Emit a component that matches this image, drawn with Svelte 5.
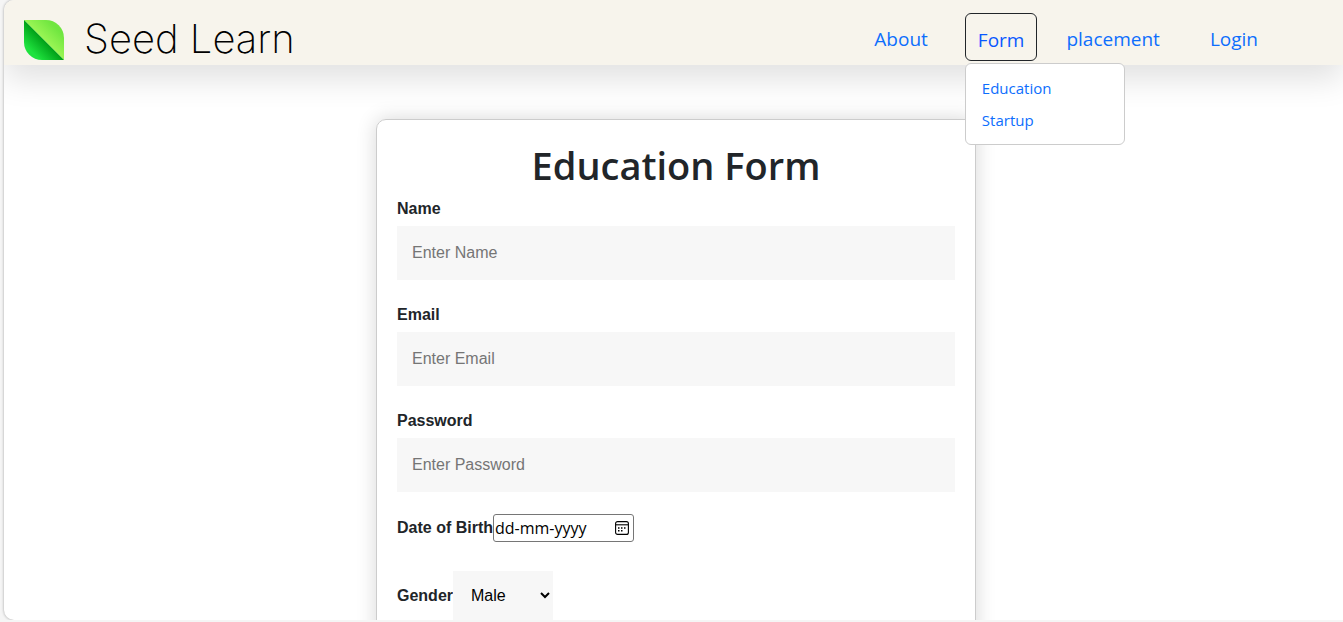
<script>
  const fields = [
    { id: 'name', label: 'Name', type: 'text' },
    { id: 'email', label: 'Email', type: 'email' },
    { id: 'password', label: 'Password', type: 'password' }
  ];
  let open = $state(true);
</script>

<div class="frame">
  <header>
    <a class="brand" href="#home">
      <svg width="40" height="40" viewBox="0 0 40 40" aria-hidden="true">
        <defs>
          <linearGradient id="light" gradientUnits="userSpaceOnUse" x1="20" y1="20" x2="32" y2="8">
            <stop offset="0" stop-color="#9bf655" />
            <stop offset="1" stop-color="#70e640" />
          </linearGradient>
          <linearGradient id="dark" gradientUnits="userSpaceOnUse" x1="8" y1="32" x2="20" y2="20">
            <stop offset="0" stop-color="#1fe23e" />
            <stop offset="1" stop-color="#00a018" />
          </linearGradient>
        </defs>
        <path d="M0 0H22A18 18 0 0 1 40 18V40Z" fill="url(#light)" />
        <path d="M0 0V22A18 18 0 0 0 18 40H40Z" fill="url(#dark)" />
      </svg>
      <span>Seed Learn</span>
    </a>
    <nav>
      <a class="link" href="#about">About</a>
      <div class="drop">
        <button type="button" class="toggle" aria-expanded={open} onclick={() => (open = !open)}>Form</button>
        {#if open}
          <div class="menu">
            <a href="#education">Education</a>
            <a href="#startup">Startup</a>
          </div>
        {/if}
      </div>
      <a class="link" href="#placement">placement</a>
      <a class="link" href="#login">Login</a>
    </nav>
  </header>

  <main>
    <form>
      <h1>Education Form</h1>
      {#each fields as f}
        <div class="field">
          <label for={f.id}>{f.label}</label>
          <input id={f.id} type={f.type} placeholder={'Enter ' + f.label} />
        </div>
      {/each}
      <div class="row">
        <label for="dob">Date of Birth</label>
        <div class="date">
          <input id="dob" type="text" placeholder="dd-mm-yyyy" />
          <button type="button" aria-label="Open calendar">
            <svg width="16" height="16" viewBox="0 0 16 16" fill="none" stroke="#000">
              <rect x="1.6" y="1.6" width="12.8" height="12.8" rx="2" stroke-width="1.1" />
              <path d="M2 4.8H14" stroke-width="1.1" />
              <path d="M4 8H5.5M7 8H8.5M10 8H11.5M4 10.7H5.5M7 10.7H8.5" stroke-width="1.5" />
            </svg>
          </button>
        </div>
      </div>
      <div class="row">
        <label for="gender">Gender</label>
        <select id="gender">
          <option>Male</option>
          <option>Female</option>
          <option>Other</option>
        </select>
      </div>
    </form>
  </main>
</div>

<style>
  :global(body) {
    background: #f5f5f5;
    font-family: "Open Sans", "Noto Sans", sans-serif;
    color: #212529;
    overflow: hidden;
  }
  * { box-sizing: border-box; }
  a { text-decoration: none; color: #0d6efd; }
  .frame {
    height: calc(100vh - 2px);
    margin-left: 4px;
    overflow: hidden;
    background: #fff;
    border-radius: 10px 0 0 10px;
    box-shadow: 0 0 3px rgba(0, 0, 0, 0.35);
  }
  header {
    position: relative;
    z-index: 2;
    display: flex;
    justify-content: space-between;
    height: 65px;
    padding: 13px 72px 0 20px;
    background: #f7f4ec;
    box-shadow: 0 14px 32px rgba(0, 0, 0, 0.12);
  }
  .brand {
    display: flex;
    align-items: center;
    gap: 20px;
    height: 54px;
    color: #000;
    font: 200 40px/48px Inter, sans-serif;
  }
  .brand span { padding-bottom: 2px; }
  nav {
    display: flex;
    align-items: flex-start;
    gap: 24px;
    font-size: 19px;
    line-height: 30px;
  }
  .link { padding: 11px 13px 7px; }
  .drop { position: relative; margin-right: -8px; }
  .toggle {
    display: block;
    height: 48px;
    padding: 6px 12px 0;
    border: 1px solid #212529;
    border-radius: 6px;
    background: none;
    color: #0a58ff;
    font: inherit;
  }
  .menu {
    position: absolute;
    top: 50px;
    left: 0;
    width: 160px;
    padding: 8px 0;
    border: 1px solid #ccc;
    border-radius: 6px;
    background: #fff;
    font-size: 15px;
    line-height: 24px;
  }
  .menu a { display: block; padding: 4px 16px; }
  main { padding: 54px 0 40px 5px; }
  form {
    max-width: 600px;
    margin: 0 auto;
    padding: 21px 20px 20px;
    border: 1px solid #ccc;
    border-radius: 10px;
    box-shadow: 0 0 20px rgba(0, 0, 0, 0.16);
  }
  h1 {
    margin: 0 0 8px;
    text-align: center;
    font-size: 38px;
    font-weight: 600;
    line-height: 48px;
  }
  .field { margin-bottom: 22px; }
  label, .field input, select { font-family: "Liberation Sans", Arial, sans-serif; font-size: 16px; }
  label { display: block; font-weight: 700; line-height: 24px; }
  .field input {
    display: block;
    width: 100%;
    height: 54px;
    margin-top: 5px;
    padding: 0 15px;
    border: 0;
    background: #f7f7f7;
  }
  .field + .field { padding-top: 1px; }
  .field input::placeholder { color: #757575; }
  .row { display: flex; align-items: center; margin-bottom: 29px; }
  .date {
    display: flex;
    align-items: center;
    width: 141px;
    height: 28px;
    padding: 0 3px 0 1px;
    border: 1px solid #767676;
    border-radius: 3px;
    background: #fff;
  }
  .date input {
    flex: 1;
    min-width: 0;
    padding: 0;
    border: 0;
    font: 16px/24px "Open Sans", sans-serif;
  }
  .date input::placeholder { color: #000; }
  .date button { display: flex; padding: 0; border: 0; background: none; }
  select {
    width: 100px;
    height: 49px;
    padding: 0 0 0 14px;
    border: 0;
    border-radius: 0;
    background: #f7f7f7;
    color: #000;
  }
</style>
